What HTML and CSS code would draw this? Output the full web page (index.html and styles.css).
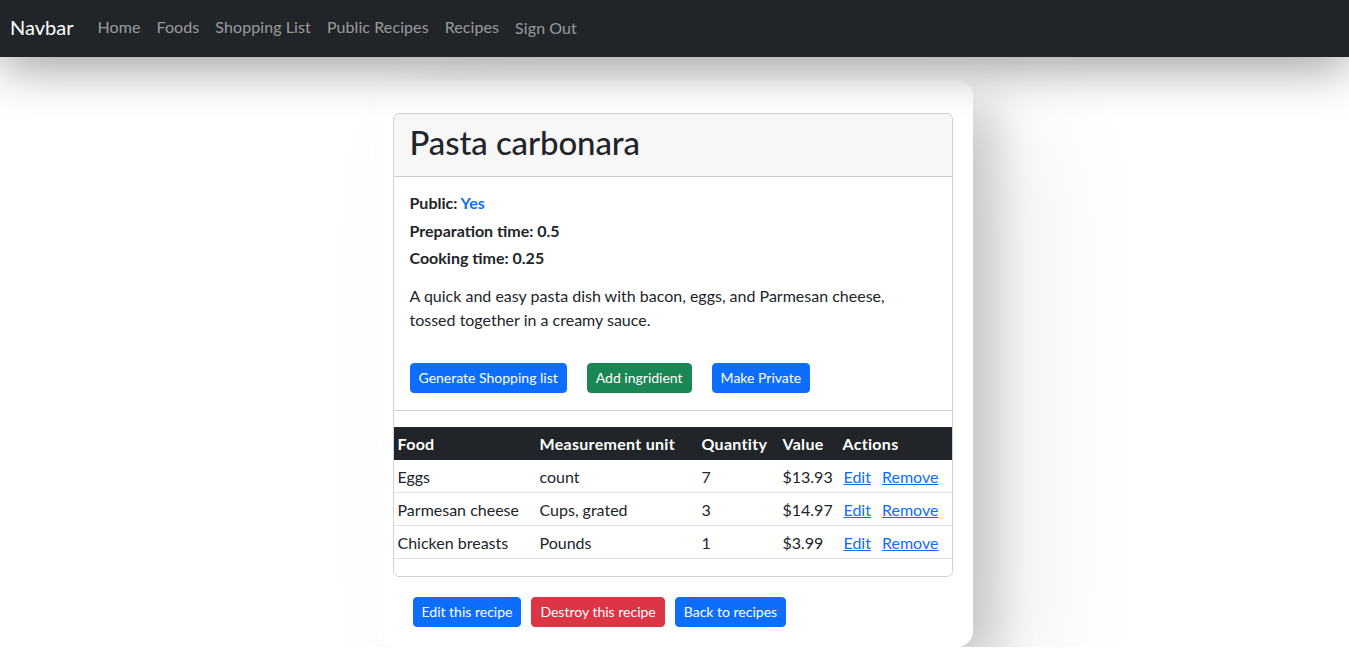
FILE: index.html
```html
<!DOCTYPE html>
<html lang="en">
<head>
<meta charset="utf-8">
<title>Pasta carbonara</title>
<link rel="stylesheet" href="styles.css">
</head>
<body>
<nav class="navbar">
  <a class="brand" href="#">Navbar</a>
  <ul class="nav-links">
    <li><a class="nav-link" href="#">Home</a></li>
    <li><a class="nav-link" href="#">Foods</a></li>
    <li><a class="nav-link" href="#">Shopping List</a></li>
    <li><a class="nav-link" href="#">Public Recipes</a></li>
    <li><a class="nav-link" href="#">Recipes</a></li>
    <li><button class="nav-link nav-button" type="button">Sign Out</button></li>
  </ul>
</nav>

<main class="sheet">
  <section class="card">
    <header class="card-header">
      <h1 class="title">Pasta carbonara</h1>
    </header>
    <div class="card-body">
      <div class="meta">
        <p class="meta-line">Public: <a class="meta-link" href="#">Yes</a></p>
        <p class="meta-line">Preparation time: 0.5</p>
        <p class="meta-line">Cooking time: 0.25</p>
      </div>
      <p class="desc">A quick and easy pasta dish with bacon, eggs, and Parmesan cheese, tossed together in a creamy sauce.</p>
      <div class="actions">
        <a class="btn btn-primary" href="#">Generate Shopping list</a>
        <a class="btn btn-success" href="#">Add ingridient</a>
        <a class="btn btn-primary" href="#">Make Private</a>
      </div>
    </div>
    <div class="ingredients">
      <table class="table">
        <colgroup>
          <col class="c-food">
          <col class="c-unit">
          <col class="c-qty">
          <col class="c-val">
          <col class="c-act">
        </colgroup>
        <thead>
          <tr><th>Food</th><th>Measurement unit</th><th>Quantity</th><th>Value</th><th>Actions</th></tr>
        </thead>
        <tbody>
          <tr><td>Eggs</td><td>count</td><td>7</td><td>$13.93</td><td><a class="row-link" href="#">Edit</a><a class="row-link" href="#">Remove</a></td></tr>
          <tr><td>Parmesan cheese</td><td>Cups, grated</td><td>3</td><td>$14.97</td><td><a class="row-link" href="#">Edit</a><a class="row-link" href="#">Remove</a></td></tr>
          <tr><td>Chicken breasts</td><td>Pounds</td><td>1</td><td>$3.99</td><td><a class="row-link" href="#">Edit</a><a class="row-link" href="#">Remove</a></td></tr>
        </tbody>
      </table>
    </div>
  </section>
  <div class="footer-actions">
    <a class="btn btn-primary" href="#">Edit this recipe</a>
    <a class="btn btn-danger" href="#">Destroy this recipe</a>
    <a class="btn btn-primary" href="#">Back to recipes</a>
  </div>
</main>
</body>
</html>
```

FILE: styles.css
```css
* { box-sizing: border-box; }

html, body {
  margin: 0;
  padding: 0;
  background: #fff;
}

body {
  font-family: "Lato", "Liberation Sans", sans-serif;
  font-size: 16px;
  line-height: 24px;
  color: #212529;
  overflow: hidden;
}

/* Navbar */
.navbar {
  position: relative;
  z-index: 2;
  height: 57px;
  display: flex;
  align-items: center;
  padding: 0 10px 4px;
  background: #212529;
  box-shadow: 0 10px 50px rgba(0, 0, 0, 0.4);
}

.brand {
  font-size: 20px;
  line-height: 30px;
  color: #fff;
  text-decoration: none;
  margin-right: 16px;
  margin-top: 1px;
}

.nav-links {
  display: flex;
  list-style: none;
  margin: 0;
  padding: 0;
}

.nav-link {
  display: block;
  padding: 8px;
  font-size: 16px;
  line-height: 24px;
  color: rgba(255, 255, 255, 0.55);
  text-decoration: none;
  letter-spacing: 0.09px;
}

.nav-button {
  background: none;
  border: 0;
  font-family: inherit;
  padding-top: 9px;
  padding-bottom: 7px;
  cursor: pointer;
}

/* Sheet */
.sheet {
  width: 596px;
  margin: 23px auto 0;
  padding: 33px 20px 20px 16px;
  background: #fff;
  border-radius: 16px;
  box-shadow: 30px 20px 40px -5px rgba(0, 0, 0, 0.16),
              60px 40px 120px rgba(0, 0, 0, 0.08);
}

.card {
  border: 1px solid rgba(0, 0, 0, 0.175);
  border-radius: 6px;
  overflow: hidden;
}

.card-header {
  height: 63px;
  padding: 0 16px 6px;
  display: flex;
  align-items: center;
  background: rgba(0, 0, 0, 0.03);
  border-bottom: 1px solid rgba(0, 0, 0, 0.175);
}

.title {
  margin: 0;
  font-size: 33px;
  line-height: 40px;
  font-weight: 500;
  letter-spacing: -0.1px;
}

.card-body {
  padding: 14px 16px 17px;
  border-bottom: 1px solid rgba(0, 0, 0, 0.175);
}

.meta {
  display: flex;
  flex-direction: column;
  gap: 3.5px;
  margin-bottom: 14px;
}

.meta-line {
  margin: 0;
  font-weight: 700;
}

.meta-link {
  color: #0d6efd;
  text-decoration: none;
}

.desc {
  margin: 0 0 31px;
  max-width: 500px;
}

.actions {
  display: flex;
  gap: 20px;
}

.btn {
  display: inline-block;
  padding: 4px 8px;
  font-size: 14px;
  line-height: 20px;
  color: #fff;
  text-decoration: none;
  border: 1px solid transparent;
  border-radius: 4px;
}

.btn-primary { background: #0d6efd; border-color: #0d6efd; }
.btn-success { background: #198754; border-color: #198754; }
.btn-danger  { background: #dc3545; border-color: #dc3545; }

/* Table */
.ingredients {
  padding: 16px 0 17px;
}

.table {
  width: 100%;
  border-collapse: collapse;
  table-layout: fixed;
}

.c-food { width: 142px; }
.c-unit { width: 162px; }
.c-qty  { width: 81px; }
.c-val  { width: 60px; }
.c-act  { width: auto; }

.table th {
  padding: 5px 4px 4px;
  text-align: left;
  font-weight: 700;
  color: #fff;
  background: #212529;
  white-space: nowrap;
  letter-spacing: 0.3px;
}

.table td {
  padding: 5px 4px 3px;
  border-bottom: 1px solid #dee2e6;
  white-space: nowrap;
}

.row-link {
  color: #0d6efd;
  text-decoration: underline;
  margin-left: 1px;
  margin-right: 10px;
}

.row-link:last-child { margin-right: 0; }

/* Footer buttons */
.footer-actions {
  display: flex;
  gap: 10px;
  margin-top: 20px;
  padding-left: 20px;
}
```
